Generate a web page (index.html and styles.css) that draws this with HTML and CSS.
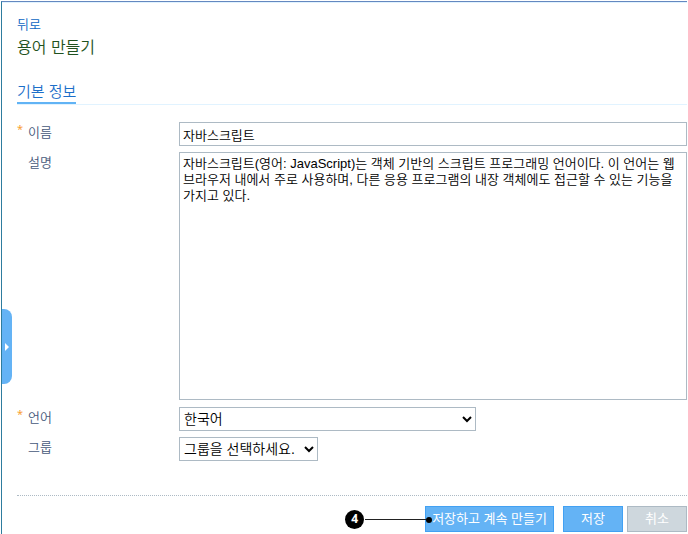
FILE: index.html
```html
<!DOCTYPE html>
<html lang="ko">
<head>
    <meta charset="UTF-8">
    <meta name="viewport" content="width=device-width, initial-scale=1.0">
    <title>용어 만들기</title>
    <link rel="stylesheet" href="styles.css">
</head>
<body>
    <!-- 사이드바 열기 -->
    <button type="button" class="side-toggle" aria-label="메뉴 열기">
        <svg width="4" height="8" viewBox="0 0 4 8"><path d="M0 0L4 4L0 8Z" fill="#fff"/></svg>
    </button>

    <main class="page">
        <a class="back" href="#">뒤로</a>
        <h1>용어 만들기</h1>

        <div class="section-head">
            <h2>기본 정보</h2>
        </div>

        <form>
            <!-- 입력 항목 -->
            <div class="row">
                <label class="required" for="name">이름</label>
                <input type="text" id="name" value="자바스크립트">
            </div>
            <div class="row row-text">
                <label for="desc">설명</label>
                <textarea id="desc" spellcheck="false">자바스크립트(영어: JavaScript)는 객체 기반의 스크립트 프로그래밍 언어이다. 이 언어는 웹 브라우저 내에서 주로 사용하며, 다른 응용 프로그램의 내장 객체에도 접근할 수 있는 기능을 가지고 있다.</textarea>
            </div>
            <div class="row">
                <label class="required" for="lang">언어</label>
                <select id="lang" class="wide">
                    <option>한국어</option>
                </select>
            </div>
            <div class="row">
                <label for="group">그룹</label>
                <select id="group" class="narrow">
                    <option>그룹을 선택하세요.</option>
                </select>
            </div>

            <!-- 버튼 -->
            <div class="actions">
                <div class="step-target">
                    <button type="submit" class="btn btn-continue">저장하고 계속 만들기</button>
                    <div class="callout">
                        <span class="callout-num">4</span>
                        <span class="callout-line"></span>
                        <span class="callout-dot"></span>
                    </div>
                </div>
                <div class="btn-pair">
                    <button type="submit" class="btn">저장</button>
                    <button type="button" class="btn btn-cancel">취소</button>
                </div>
            </div>
        </form>
    </main>
</body>
</html>
```
FILE: styles.css
```css
* {
    margin: 0;
    padding: 0;
    box-sizing: border-box;
}

body {
    font-family: "Liberation Sans", "Noto Sans CJK KR", sans-serif;
    font-size: 13px;
    font-weight: 350;
    line-height: 16px;
    background-color: #fff;
    padding: 1px 1px 0;
}

button, input, select, textarea {
    font: inherit;
}

.page {
    min-height: calc(100vh - 1px);
    border-top: 1px solid #6488c0;
    border-left: 1px solid #2e7c9e;
    box-shadow: inset 0 1px #e1f3ff;
    padding: 15px 0 0 15px;
}

.back {
    display: block;
    width: max-content;
    color: #0b66c3;
    text-decoration: none;
}

h1 {
    margin-top: 4px;
    font-size: 16px;
    line-height: 22px;
    font-weight: 350;
    color: #1f5220;
}

/* 섹션 제목 */
.section-head {
    display: flex;
    margin: 23px 0 17px;
    border-bottom: 1px solid #e1f3ff;
}

h2 {
    border-bottom: 2px solid #61b3f5;
    font-size: 15px;
    line-height: 20px;
    font-weight: 350;
    color: #1c6fc9;
}

/* 입력 행 */
.row {
    display: flex;
    align-items: flex-start;
    margin-bottom: 6px;
}

.row-text {
    margin-bottom: 7px;
}

.row label {
    flex: 0 0 162px;
    position: relative;
    padding: 3px 0 0 11px;
    color: #46587a;
}

.required::before {
    content: "*";
    position: absolute;
    left: 0;
    top: 0;
    font-family: "Noto Sans", sans-serif;
    font-size: 11px;
    font-weight: 400;
    line-height: 14px;
    color: #f9a132;
}

.row input,
.row textarea,
.row select {
    border: 1px solid #adbac4;
    border-radius: 0;
    background-color: #fff;
    color: #000;
    outline: none;
}

.row input,
.row textarea {
    flex: 1;
    min-width: 0;
}

.row input {
    height: 24px;
    padding: 0 3px;
}

.row textarea {
    height: 248px;
    padding: 3px;
    resize: none;
    overflow: hidden;
}

.row select {
    height: 24px;
    font-size: 14px;
}

.row .wide {
    width: 297px;
}

.row .narrow {
    width: 139px;
}

/* 하단 버튼 */
.actions {
    display: flex;
    justify-content: flex-end;
    gap: 9px;
    margin-top: 34px;
    padding-top: 10px;
    border-top: 1px dotted #adbac4;
}

.btn-pair {
    display: flex;
    gap: 4px;
}

.btn {
    height: 26px;
    min-width: 60px;
    border: 1px solid #42a1f3;
    background-color: #64b3f5;
    color: #fff;
    font-weight: 400;
    cursor: pointer;
}

.btn-continue {
    padding: 0 6px;
}

.btn-cancel {
    border-color: #adbac4;
    background-color: #ced7dd;
}

/* 단계 표시 */
.step-target {
    position: relative;
}

.callout {
    position: absolute;
    right: calc(100% - 7px);
    top: 4px;
    display: flex;
    align-items: center;
    pointer-events: none;
}

.callout-num {
    width: 19px;
    height: 19px;
    border-radius: 50%;
    background-color: #000;
    color: #fff;
    font: bold 12px/18px "Open Sans", sans-serif;
    text-align: center;
}

.callout-line {
    width: 61px;
    height: 1px;
    margin-left: 1px;
    background-color: #222;
}

.callout-dot {
    width: 6px;
    height: 6px;
    border-radius: 50%;
    background-color: #000;
}

.side-toggle {
    position: absolute;
    left: 2px;
    top: 309px;
    width: 10px;
    height: 75px;
    padding-left: 3px;
    border: none;
    border-radius: 0 8px 8px 0;
    background-color: #64b3f5;
    display: flex;
    align-items: center;
    cursor: pointer;
}
```
